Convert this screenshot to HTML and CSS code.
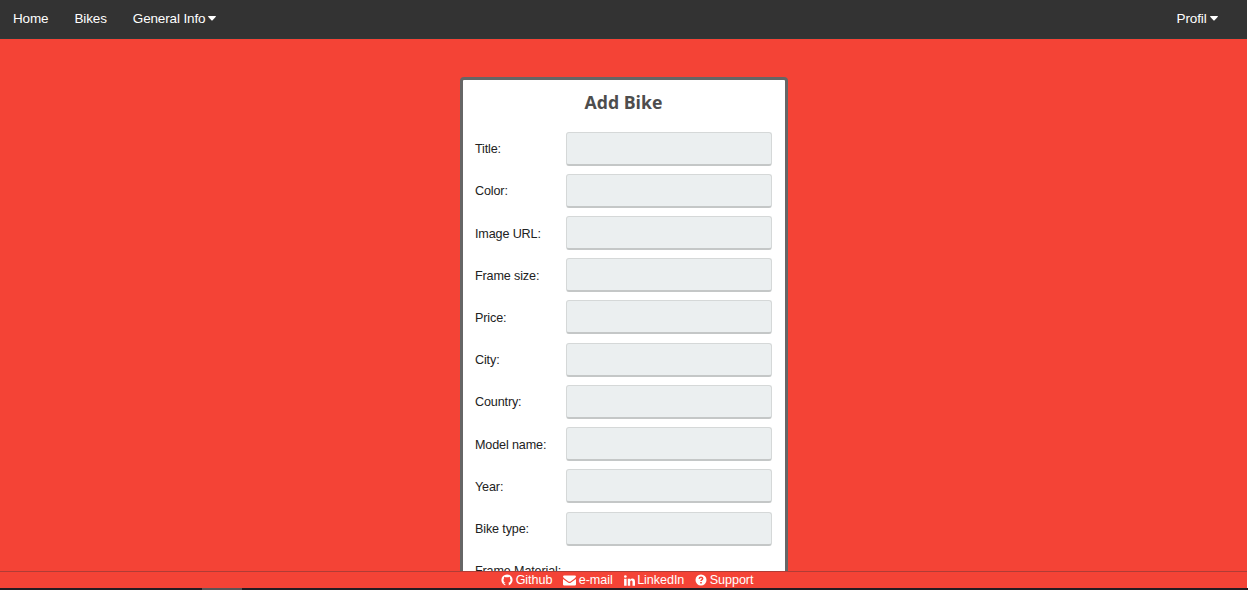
FILE: index.html
```html
<!DOCTYPE html>
<html lang="en">
<head>
<meta charset="utf-8">
<title>Add Bike</title>
<link rel="stylesheet" href="styles.css">
</head>
<body>
<nav class="nav">
  <a class="nav-link">Home</a>
  <a class="nav-link">Bikes</a>
  <a class="nav-link">General Info<svg class="caret" viewBox="0 0 8 5"><path d="M.5 0h7q.7.2.3.8L4.4 4.4q-.4.4-.8 0L.2.8Q-.2.2.5 0z"/></svg></a>
  <a class="nav-link nav-profile">Profil<svg class="caret" viewBox="0 0 8 5"><path d="M.5 0h7q.7.2.3.8L4.4 4.4q-.4.4-.8 0L.2.8Q-.2.2.5 0z"/></svg></a>
</nav>
<main class="main">
  <form class="card">
    <h1 class="card-title">Add Bike</h1>
    <label class="row"><span class="label">Title:</span><input class="input" type="text"></label>
    <label class="row"><span class="label">Color:</span><input class="input" type="text"></label>
    <label class="row"><span class="label">Image URL:</span><input class="input" type="text"></label>
    <label class="row"><span class="label">Frame size:</span><input class="input" type="text"></label>
    <label class="row"><span class="label">Price:</span><input class="input" type="text"></label>
    <label class="row"><span class="label">City:</span><input class="input" type="text"></label>
    <label class="row"><span class="label">Country:</span><input class="input" type="text"></label>
    <label class="row"><span class="label">Model name:</span><input class="input" type="text"></label>
    <label class="row"><span class="label">Year:</span><input class="input" type="text"></label>
    <label class="row"><span class="label">Bike type:</span><input class="input" type="text"></label>
    <label class="row"><span class="label">Frame Material:</span></label>
  </form>
</main>
<footer class="footer">
  <a class="footer-link"><svg class="icon icon-github" viewBox="0 0 12 12"><circle cx="6" cy="6" r="5.600"/><path d="M4.300 12V9.900Q3 10.100 2.500 8.800q.6-.3 1.100.4l.9-.5C3.100 8.300 2.500 7.400 2.500 5.900q0-1 .6-1.600-.2-.8.100-1.500.7 0 1.500.5 1.300-.3 2.600 0 .8-.5 1.500-.5.3.7.1 1.500.6.6.6 1.600c0 1.500-.6 2.400-2 2.800q.3.400.3 1V12z" fill="#f44336"/></svg>Github</a>
  <a class="footer-link"><svg class="icon icon-mail" viewBox="0 0 13 11"><path d="M1.200.5h10.600q1.200 0 1.200 1.100Q12.800 2.800 11.600 3.600L7.500 6.500q-1 .7-2 0L1.400 3.600Q.2 2.800 0 1.600 0 .5 1.200.5zM0 4.100l5 3.500q1.500 1 3 0l5-3.500v5.300q0 1.100-1.200 1.100H1.200Q0 10.500 0 9.400z"/></svg>e-mail</a>
  <a class="footer-link"><svg class="icon icon-linkedin" viewBox="0 0 11 11"><path d="M.1 3.700h2.500v7H.1zM3.800 3.700h2.400v1c.5-.8 1.200-1.200 2.200-1.200 1.700 0 2.600 1.100 2.600 3.200v4H8.500V7c0-1-.4-1.500-1.100-1.500-.8 0-1.200.5-1.200 1.500v3.700H3.800z"/><circle cx="1.350" cy="1.500" r="1.350"/></svg>LinkedIn</a>
  <a class="footer-link"><svg class="icon icon-help" viewBox="0 0 12 12"><circle cx="6" cy="6" r="5.500"/><path d="M4.100 4.700Q4.500 3.200 6 3.200q1.700 0 1.700 1.300Q7.700 5.300 6.700 5.900 6 6.300 6 7" fill="none" stroke="#f44336" stroke-width="1.500"/><path d="M5.200 7.900h1.600v1.500H5.200z" fill="#f44336"/></svg>Support</a>
</footer>
<div class="taskbar"><span class="taskbar-item"></span></div>
</body>
</html>
```
FILE: styles.css
```css
* { box-sizing: border-box; }
body {
  margin: 0;
  height: 592px;
  display: flex;
  flex-direction: column;
  overflow: hidden;
  background: #fff;
  font-family: "Liberation Sans", Arial, sans-serif;
}
.nav {
  flex: none;
  display: flex;
  gap: 26px;
  height: 39px;
  width: 1247px;
  padding: 0 29.500px 1px 13px;
  align-items: center;
  border-bottom: 1px solid #2b3a3a;
  background: #333;
  color: #fff;
  font-size: 13.500px;
  letter-spacing: -0.140px;
}
.nav-link { display: flex; align-items: center; white-space: nowrap; }
.nav-profile { margin-left: auto; }
.caret { width: 8px; height: 5px; margin-left: 3px; fill: #fff; }
.main {
  flex: none;
  height: 532px;
  width: 1247px;
  padding-top: 38px;
  overflow: hidden;
  background: #f44336;
}
.card {
  width: 328px;
  height: 700px;
  margin: 0 auto;
  padding: 0 12px;
  border: 3px solid #666;
  border-radius: 4px;
  background: #fff;
}
.card-title {
  margin: 0;
  height: 47.500px;
  padding-top: 10px;
  line-height: 24px;
  text-align: center;
  font-family: "Open Sans", "Noto Sans", sans-serif;
  font-size: 17.700px;
  font-weight: 700;
  color: #4d4d4d;
}
.row { display: flex; align-items: center; height: 42.220px; }
.label {
  width: 91px;
  flex: none;
  padding: 1px 0 0 0.500px;
  white-space: nowrap;
  font-size: 12.600px;
  letter-spacing: -0.140px;
  color: #222;
}
.input {
  width: 206px;
  height: 34px;
  border: 1px solid #d5d8d8;
  border-bottom: 2px solid #c4c7c7;
  border-radius: 3px;
  background: #ebeff0;
}
.footer {
  flex: none;
  display: flex;
  justify-content: center;
  gap: 11px;
  height: 17px;
  width: 1247px;
  padding-left: 7.500px;
  align-items: center;
  border-top: 1px solid #b03c36;
  background: #f44336;
  color: #fff;
  font-size: 12.600px;
  letter-spacing: -0.070px;
  line-height: 16px;
}
.footer-link { display: flex; align-items: center; gap: 2.500px; }
.icon { height: 12px; width: 12px; fill: #fff; }
.icon-mail { width: 13px; height: 11px; }
.icon-linkedin { width: 11px; height: 11px; }
.taskbar { flex: none; height: 2px; background: #241c22; }
.taskbar-item { display: block; width: 40px; height: 2px; margin-left: 202px; background: #5c5455; }
```
